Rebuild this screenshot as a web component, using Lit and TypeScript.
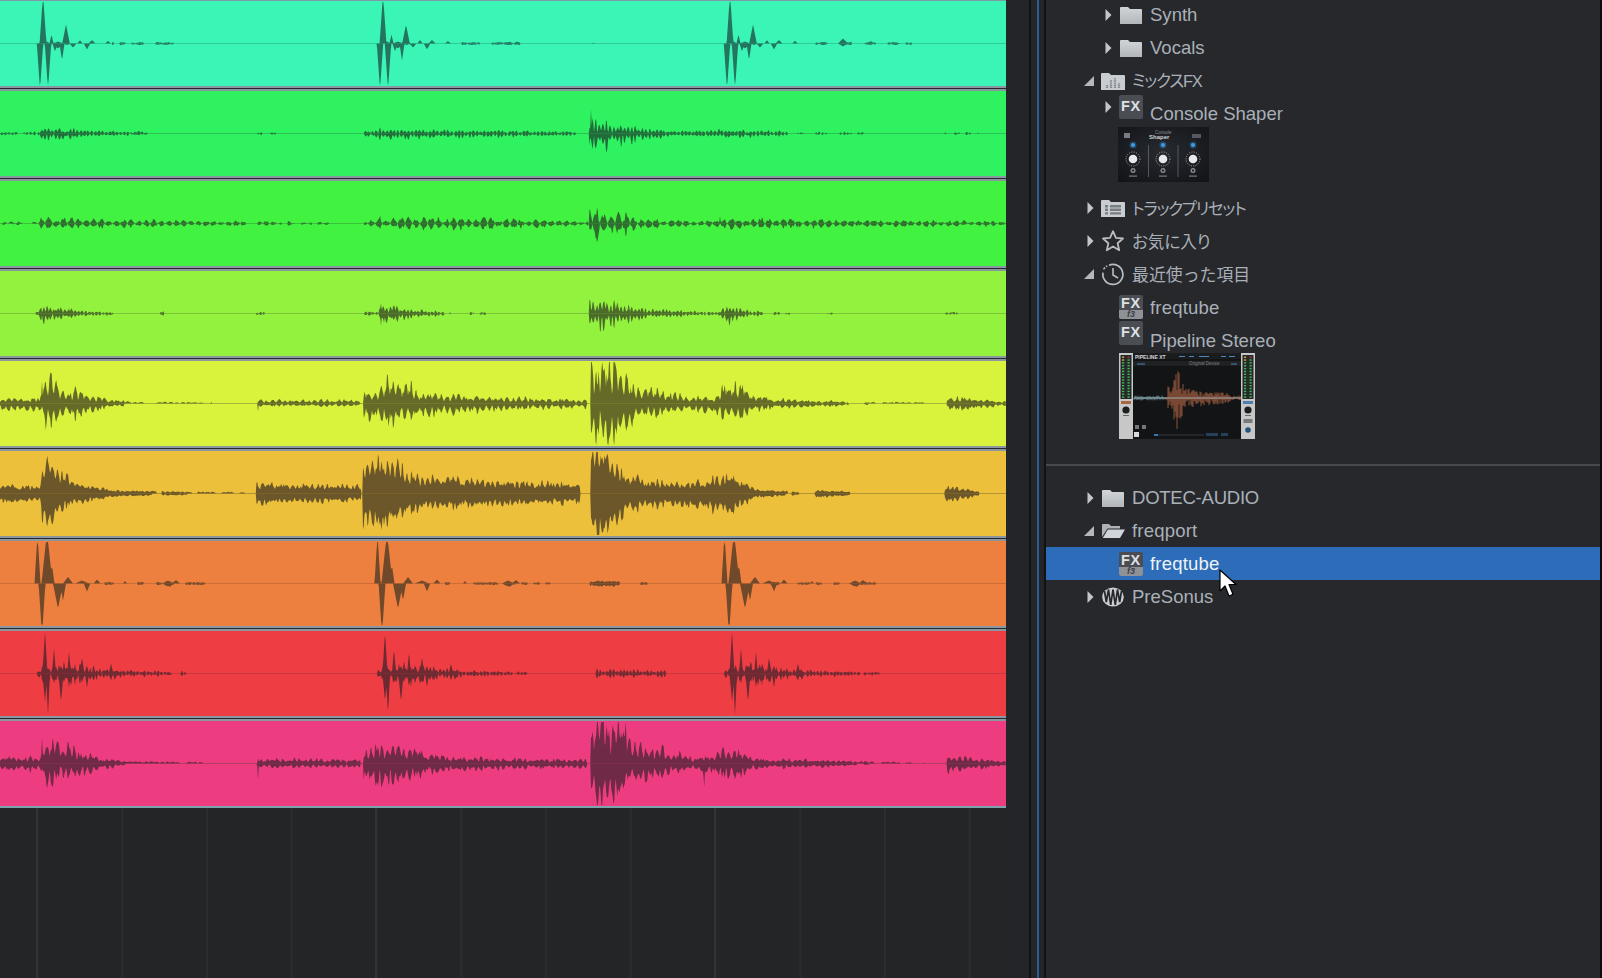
import { LitElement, html, css, svg } from "lit";
import { customElement } from "lit/decorators.js";

type K = [number, number][];
type S = [number, number, number, number];
interface Wave { color: string; ink: string; line: string; u: K; d: K; s: S[]; p: number; seed: number; sol: number; }

const key = (k: K, x: number) => {
  if (!k.length || x < k[0][0] || x > k[k.length - 1][0]) return 0;
  for (let i = 1; i < k.length; i++) {
    if (x <= k[i][0]) {
      const [a, va] = k[i - 1], [b, vb] = k[i];
      return b === a ? vb : va + ((vb - va) * (x - a)) / (b - a);
    }
  }
  return 0;
};
const hash = (n: number) => { const v = Math.sin(n * 127.1 + 11.7) * 43758.5453; return v - Math.floor(v); };
const modul = (x: number, w: Wave, seed: number) => {
  const ripple = Math.abs(Math.sin((Math.PI * x) / w.p));
  const base = w.sol + (1 - w.sol) * ripple;
  const noiseAmp = 0.8 * (1 - w.sol * 0.6);
  const lump = 1 - (1 - w.sol) * 0.5 * (1 - Math.abs(Math.sin((Math.PI * x) / (w.p * 3.7))));
  return base * lump * (1.15 - noiseAmp * hash(Math.floor(x / 1.5) + seed));
};
const rep = (list: S[], offs: number[]) => offs.flatMap((o) => list.map(([x, u, d, h]) => [x + o, u, d, h] as S));

const wavePath = (w: Wave) => {
  const H = 42.5, top: string[] = [], bot: string[] = [];
  for (let x = 0; x <= 1006; x += 0.75) {
    const one = (k: K, idx: 1 | 2, seed: number) => {
      const kv = key(k, x);
      let a = kv * modul(x, w, seed);
      if (a < 0.5) a = 0;
      if (kv < 2.6 && hash(Math.floor(x / 6) + w.seed * 2) < (kv < 1.7 ? 0.55 : 0.3)) a = 0;
      for (const sp of w.s) {
        const t = 1 - Math.abs(x - sp[0]) / sp[3];
        if (t > 0) a = Math.max(a, sp[idx] * t);
      }
      return Math.min(a, 41.5);
    };
    top.push(`${x} ${(H - one(w.u, 1, w.seed)).toFixed(1)}`);
    bot.unshift(`${x} ${(H + one(w.d, 2, w.seed + 91)).toFixed(1)}`);
  }
  return `M${top.join("L")}L${bot.join("L")}Z`;
};

const sparse = (a: number, b: number, v = 1.4): [K, K] => [[[a, v], [b, v]], [[a, v], [b, v]]];
const join = (...parts: [K, K][]): [K, K] => [parts.flatMap((p) => [[p[0][0][0] - 0.1, 0], ...p[0], [p[0][p[0].length - 1][0] + 0.1, 0]] as K), parts.flatMap((p) => [[p[1][0][0] - 0.1, 0], ...p[1], [p[1][p[1].length - 1][0] + 0.1, 0]] as K)];

const k1 = join(sparse(112, 187, 1.6), sparse(452, 520, 1.6), sparse(593, 615, 1.4), sparse(790, 918, 1.6));
const kick1: S[] = [[43, 50, 0, 3.4], [47, 2, 0, 3], [51.5, 9, 0, 2], [58, 2, 0, 5], [66, 19, 0, 3.8], [80, 3.5, 0, 2.5], [92, 3.5, 0, 3.5], [108, 2.5, 0, 3],
  [40, 0, 46, 3.2], [48, 0, 46, 3.2], [55, 0, 8, 2.5], [62, 0, 17, 2.5], [58, 0, 5, 5], [73, 0, 4, 3.5], [87, 0, 6, 3.2], [67, 0, 1.5, 4]];
const k7 = join(sparse(105, 205, 1.6), sparse(445, 550, 1.6), sparse(590, 620, 3.2), sparse(640, 648, 1.5), sparse(770, 880, 1.6));
const kick7: S[] = [[37.5, 50, 0, 3], [47, 52, 0, 5.5], [52, 18, 0, 2.5], [68, 6.5, 0, 5], [82, 3, 0, 7], [97, 4, 0, 3.5], [125, 2.5, 0, 2], [168, 3, 3, 6], [176, 3.5, 0, 4],
  [42, 0, 52, 3.4], [58, 0, 25, 5], [63, 0, 17, 3], [87, 0, 8, 3.2], [170, 0, 3.5, 3]];
const k8 = join(
  [[[38, 4], [45, 9], [80, 9], [100, 6], [120, 4], [190, 2.1]], [[38, 4], [45, 9], [80, 10], [100, 6], [120, 4], [190, 2.1]]],
  [[[378, 4], [385, 9], [420, 9], [440, 6], [460, 4], [530, 2.2]], [[378, 4], [385, 9], [420, 10], [440, 6], [460, 4], [530, 2.2]]],
  [[[596, 5], [667, 4]], [[596, 5], [667, 4]]],
  [[[725, 4], [732, 9], [767, 9], [787, 6], [807, 4], [880, 2.1]], [[725, 4], [732, 9], [767, 10], [787, 6], [807, 4], [880, 2.1]]]);
const kick8: S[] = [[45, 42, 28, 2.5], [48, 6, 42, 2], [54, 25, 10, 2], [59, 10, 8, 1.5], [61, 8, 29, 2.5], [64, 14, 10, 1.5], [69, 22, 14, 1.8], [71, 6, 14, 1.5], [75, 10, 12, 1.5], [82, 17, 10, 2], [87, 8, 14, 2], [94, 7, 8, 1.5], [100, 6, 4, 1.5], [111, 10, 7, 2.2], [115, 3, 7, 2], [38, 3, 4, 1]];

const w3 = join(
  [[[0, 2], [39, 2], [45, 7], [90, 5.5], [200, 3], [340, 1.8]], [[0, 1.6], [39, 1.6], [45, 6], [90, 5.5], [200, 3], [340, 1.6]]],
  [[[364, 2.5], [378, 4], [400, 7.5], [480, 6.5], [588, 3]], [[364, 2], [378, 4], [400, 7.5], [480, 6.5], [588, 3]]],
  [[[589, 17], [615, 13], [644, 5], [700, 3], [725, 6.5], [800, 5], [1006, 2.7]], [[589, 19], [615, 15], [644, 6], [700, 3], [725, 6.5], [800, 5], [1006, 2.7]]]);
const w2 = join(
  [[[0, 2.2], [38, 2.2], [40, 6], [78, 5], [86, 3.5], [148, 2.4]], [[0, 2], [38, 2], [40, 7], [78, 6], [86, 3.5], [148, 2.2]]],
  sparse(256, 278, 1.6),
  [[[364, 3], [378, 4], [395, 4.5], [450, 4], [580, 2.5]], [[364, 3], [378, 6], [395, 7], [450, 5], [580, 2.5]]],
  [[[589, 16], [610, 12], [644, 6], [680, 3], [730, 4.5], [790, 2.5]], [[589, 24], [610, 16], [644, 7], [680, 3], [730, 5], [790, 2.5]]],
  sparse(790, 870, 1.6), sparse(945, 978, 1.6));
const w4 = join(
  [[[0, 1.6], [37, 1.6], [42, 10], [60, 7], [85, 3], [113, 2.2]], [[0, 1.6], [37, 1.6], [42, 10], [60, 7], [85, 3], [113, 2.2]]],
  sparse(160, 164, 3), sparse(256, 264, 2),
  [[[364, 2.2], [378, 2.2], [384, 12], [412, 4.5], [450, 2.2]], [[364, 2.2], [378, 2.2], [384, 13], [412, 5], [450, 2.2]]],
  sparse(470, 520, 1.6),
  [[[589, 18], [610, 13], [644, 6], [683, 3.5], [720, 2], [726, 11], [750, 3], [795, 1.6]], [[589, 21], [610, 15], [644, 6], [683, 3.5], [720, 2], [726, 13], [750, 3], [795, 1.6]]],
  sparse(820, 838, 1.6), sparse(945, 966, 1.6));
const w5 = join(
  [[[0, 6], [40, 6], [42, 24], [50, 33], [60, 16], [85, 16], [100, 7], [125, 3.2], [138, 1.6], [212, 1.6]], [[0, 8], [40, 8], [44, 22], [50, 26], [60, 16], [85, 16], [100, 7], [125, 2.4]]],
  [[[258, 4.2], [360, 4]], [[258, 3.2], [360, 3.2]]],
  [[[364, 13], [378, 16], [392, 32], [420, 15], [451, 10], [520, 7], [587, 4.4]], [[364, 20], [378, 22], [390, 26], [420, 16], [451, 12], [520, 7], [587, 5.4]]],
  [[[591, 50], [618, 50], [632, 22], [644, 20], [695, 8], [715, 9], [728, 26], [740, 26], [752, 10], [773, 6], [818, 3.4], [870, 2], [925, 1.6]], [[591, 50], [609, 50], [625, 30], [644, 17], [695, 8], [725, 16], [735, 22], [752, 10], [773, 6], [818, 4], [870, 1.6]]],
  [[[947, 9], [965, 7], [1006, 2.2]], [[947, 9], [965, 8], [1006, 2.2]]]);
const w6 = join(
  [[[0, 9], [40, 8], [42, 20], [48, 36], [64, 21], [84, 10], [116, 3.4], [187, 2], [245, 1.6]], [[0, 10], [40, 8], [42, 28], [52, 36], [64, 15], [84, 10], [116, 3.4], [187, 1.8]]],
  [[[256, 12], [290, 10], [361, 8.5]], [[256, 13], [290, 10], [361, 8.5]]],
  [[[363, 32], [385, 38], [419, 19], [500, 14], [580, 11]], [[363, 36], [385, 38], [419, 17], [500, 13], [580, 11]]],
  [[[591, 50], [605, 50], [618, 26], [644, 14], [690, 12], [715, 17], [730, 21], [754, 5], [799, 1.8]], [[591, 50], [600, 50], [618, 28], [644, 14], [700, 15], [730, 23], [754, 5], [799, 1.6]]],
  [[[815, 3.4], [850, 2.4]], [[815, 4.4], [850, 2.4]]],
  [[[945, 7.5], [957, 6.5], [979, 2.4]], [[945, 8.5], [957, 7.5], [979, 2.4]]]);
const w9 = join(
  [[[0, 7], [40, 7], [42, 24], [50, 28], [62, 24], [85, 13], [100, 6], [125, 3], [160, 2.4], [210, 1.6]], [[0, 8], [40, 8], [44, 22], [50, 26], [60, 16], [85, 14], [100, 7], [125, 2.4]]],
  [[[258, 5.5], [360, 4.6]], [[258, 4.6], [360, 4.6]]],
  [[[364, 16], [378, 22], [395, 22], [420, 14], [451, 8], [520, 5.5], [587, 4.5]], [[364, 20], [378, 24], [390, 28], [420, 14], [451, 9], [520, 6.5], [587, 4.5]]],
  [[[591, 50], [625, 50], [635, 24], [660, 18], [695, 7], [715, 9], [728, 20], [740, 15], [752, 7], [773, 5], [818, 4.5], [870, 2.4], [925, 1.6]], [[591, 50], [612, 50], [625, 28], [660, 15], [695, 7], [725, 16], [735, 20], [752, 7], [773, 5], [818, 4.5], [870, 1.6]]],
  [[[947, 9], [965, 7], [1006, 2.6]], [[947, 10], [965, 8], [1006, 2.6]]]);

const waves: Wave[] = [
  { color: "#3bf5b6", ink: "#23755f", line: "#30cc99", u: k1[0], d: k1[1], s: [...rep(kick1, [0, 340, 687]), [843, 5, 3, 5], [871, 2.5, 1, 3]], p: 9, seed: 3, sol: .5 },
  { color: "#2ef260", ink: "#226c3c", line: "#2bc354", u: w2[0], d: w2[1], s: [[591, 24, 0, 1], [380, 8, 0, 1.2], [719, 6, 0, 1.5]], p: 3.6, seed: 7, sol: .15 },
  { color: "#42f240", ink: "#306d30", line: "#3ac338", u: w3[0], d: w3[1], s: [[41, 8, 7, 1.2], [380, 10, 7, 1.2], [720, 7, 0, 1]], p: 7.5, seed: 13, sol: .05 },
  { color: "#92f23e", ink: "#4b6b2a", line: "#7cc43a", u: w4[0], d: w4[1], s: [[41, 8, 9, 1.2], [381, 10, 12, 1.2], [727, 9, 10, 1.2]], p: 3.5, seed: 21, sol: .2 },
  { color: "#d9f23c", ink: "#666a28", line: "#a8b836", u: w5[0], d: w5[1], s: [[42, 22, 0, 1.2], [50, 29, 6, 1.3], [46, 4, 33, 1.3], [258, 2, 8, 0.8], [364, 10, 20, 0.9]], p: 6, seed: 31, sol: .35 },
  { color: "#ecc03b", ink: "#6b5729", line: "#b49433", u: w6[0], d: w6[1], s: [[48, 30, 0, 1.3], [597, 42, 42, 2], [730, 17, 20, 1]], p: 5, seed: 37, sol: .62 },
  { color: "#ee803f", ink: "#70492b", line: "#cc6f38", u: k7[0], d: k7[1], s: rep(kick7, [0, 340, 687]), p: 4, seed: 43, sol: .5 },
  { color: "#ee3d43", ink: "#6c2a32", line: "#c9373d", u: k8[0], d: k8[1], s: rep(kick8, [0, 340, 687]), p: 3.4, seed: 53, sol: .12 },
  { color: "#ee3c80", ink: "#6e2a47", line: "#b93a6a", u: w9[0], d: w9[1], s: [[42, 26, 4, 1], [47, 4, 30, 1.3], [258, 5, 16, 0.9], [704, 4, 34, 0.8], [364, 8, 24, 0.8]], p: 5.5, seed: 61, sol: .4 },
];

const folder = svg`<svg class="ic" width="24" height="20" viewBox="0 0 24 20"><defs><linearGradient id="f" x1="0" y1="0" x2="0" y2="1"><stop offset="0" stop-color="#d2d5d8"/><stop offset="1" stop-color="#b2b6ba"/></linearGradient></defs><path d="M1 3a1 1 0 0 1 1-1h7l2 2h11a1 1 0 0 1 1 1v14H1z" fill="url(#f)"/></svg>`;
const folderOpen = svg`<svg class="ic" width="24" height="20" viewBox="0 0 24 20"><path d="M1 4a1 1 0 0 1 1-1h6l2 2h9v2.5H6.5L1 16z" fill="#aeb2b7"/><path d="M6.8 8.5H24L19 17H1.8z" fill="#d1d4d8"/></svg>`;
const folderMix = svg`<svg class="ic" width="24" height="20" viewBox="0 0 24 20"><path d="M0 3a1 1 0 0 1 1-1h7l2 2h13a1 1 0 0 1 1 1v14H0z" fill="#c9ccd0"/><path d="M6 17v-3M10 17V9M14 17V7M18 17v-5" stroke="#858a90" stroke-width="2.200" stroke-dasharray="1.400 .7" fill="none"/></svg>`;
const folderList = svg`<svg class="ic" width="24" height="20" viewBox="0 0 24 20"><path d="M0 3a1 1 0 0 1 1-1h7l2 2h13a1 1 0 0 1 1 1v14H0z" fill="#c9ccd0"/><path d="M4 7h3v2.400H4zm5 0h11v2.400H9zm-5 3.600h3V13H4zm5 0h11V13H9zM4 14.200h3v2.400H4zm5 0h11v2.400H9z" fill="#797e85"/></svg>`;
const star = svg`<svg class="ic" width="24" height="24" viewBox="0 0 24 24"><path d="M12 2.200l2.900 6.600 7.100.7-5.400 4.700 1.600 7-6.200-3.700-6.200 3.700 1.600-7L2 9.500l7.100-.7z" fill="none" stroke="#b9bdc2" stroke-width="1.800" stroke-linejoin="round"/></svg>`;
const clock = svg`<svg class="ic" width="24" height="24" viewBox="0 0 24 24"><path d="M8 3.200a10 10 0 1 1-6 7.500" fill="none" stroke="#b9bdc2" stroke-width="1.700"/><path d="M2.500 7.200l1.500-1.700M5 4.600l1.200-.8" stroke="#b9bdc2" stroke-width="1.500" fill="none"/><path d="M12 6v7l5 3" fill="none" stroke="#b9bdc2" stroke-width="1.600"/></svg>`;
const presonus = svg`<svg class="ic" width="24" height="24" viewBox="0 0 24 24"><ellipse cx="12" cy="12" rx="10.800" ry="9.500" fill="#c9ccd0"/><path d="M3.500 6l1.800 11L7.500 4.500 9.700 20l2.300-15.500L14.300 20l2.200-15.500L18.700 17l1.800-11" stroke="#25272b" stroke-width="1.700" fill="none"/></svg>`;

const fx = html`<span class="fx"><span class="fxt">FX</span></span>`;
const fxv = html`<span class="fx two"><span class="fxt">FX</span><span class="fxb">f3</span></span>`;

const consoleThumb = svg`<svg class="thumb" width="91" height="55" viewBox="0 0 91 55">
  <defs><radialGradient id="cg" cx=".5" cy=".45" r=".7"><stop offset="0" stop-color="#272a2f"/><stop offset="1" stop-color="#121418"/></radialGradient></defs>
  <rect width="91" height="55" fill="url(#cg)"/>
  <rect x="6" y="6" width="6" height="5" fill="#777c82"/>
  <text x="37" y="6.500" class="t1" fill="#8b8f95">Console</text>
  <text x="31" y="11.500" class="t2" fill="#d0d2d5">Shaper</text>
  <rect x="74" y="7" width="9" height="4" fill="#55595f"/>
  <path d="M30.500 18v32M60 18v32" stroke="#63676d" stroke-width=".8"/>
  ${[15, 45, 75].map((x) => svg`
    <circle cx=${x} cy="18" r="2" fill="#3a9eea"/><circle cx=${x} cy="18" r="3.600" fill="#3a9eea" opacity=".3"/>
    <circle cx=${x} cy="32" r="7" fill="none" stroke="#a9adb2" stroke-width="1" stroke-dasharray="1 1.400"/>
    <circle cx=${x} cy="32" r="4.300" fill="#e8e9ea"/>
    <circle cx=${x} cy="43.500" r="2.500" fill="#8b8f95"/><circle cx=${x} cy="43.500" r="1.200" fill="#2a2c30"/>
    <rect x=${x - 4} y="48.500" width="8" height="1.200" fill="#777c82"/>`)}
</svg>`;

const meter = (x: number) => svg`
  <rect x=${x} y="0" width="14" height="86" fill="#c6c7c6"/>
  <rect x=${x + 1.500} y="2" width="11" height="44" fill="#26282a"/>
  ${Array.from({ length: 15 }, (_, i) => svg`<rect x=${x + 3} y=${3.500 + i * 2.850} width="2.200" height="1.400" fill=${i < 2 ? "#d9a63a" : "#3fbb55"}/><rect x=${x + 8.500} y=${3.500 + i * 2.850} width="2.200" height="1.400" fill=${i < 1 ? "#b33" : "#3fbb55"}/>`)}
  <rect x=${x + 2} y="48" width="10" height="3" fill=${x < 20 ? "#a8683f" : "#4a7fb0"}/>
  <circle cx=${x + 7} cy="57" r="3.600" fill="#1c1d1f"/>
  <rect x=${x + 4} y="62" width="6" height="1" fill="#66696d"/>`;

const pipeWave = (() => {
  let d = "", e = "";
  for (let x = 15; x < 123; x++) {
    const c = Math.exp(-Math.pow((x - 58) / 5, 2));
    const broad = x > 48 && x < 112 ? 9 * (1 - (x - 48) / 90) : 0;
    const a = (2.500 + broad + 18 * c) * (0.2 + 0.8 * hash(x * 3));
    const b = (2.500 + broad + 22 * c) * (0.2 + 0.8 * hash(x * 5 + 2));
    (x > 46 ? (d += `M${x} ${45 - a}V${45 + b}`) : (e += `M${x} ${45 - a}V${45 + b}`));
  }
  return { d, e };
})();
const pipelineThumb = svg`<svg class="thumb" width="136" height="86" viewBox="0 0 136 86">
  <rect width="136" height="86" fill="#131416"/>
  <rect x="14" y="0" width="109" height="6" fill="#1b1c1e"/>
  <rect x="14" y="8" width="109" height="5" fill="#1f2123"/>
  <text x="16" y="5.500" class="t3" fill="#d4d5d6">PIPELINE XT</text>
  <text x="70" y="12" class="t1" fill="#7f8387">Original Device</text>
  <path d="M60 3.500h6M70 3.500h5M80 3.500h10M102 3.500h5M110 3.500h6M18 11h8M112 11h6" stroke="#4a86c2" stroke-width="1"/>
  <path d=${pipeWave.e} stroke="#7da7b4" stroke-width=".7" fill="none"/>
  <path d=${pipeWave.d} stroke="#c4704b" stroke-width=".7" fill="none"/>
  <path d="M15 45h107" stroke="#a9c0c4" stroke-width=".8"/>
  <rect x="16" y="72" width="4" height="4" fill="#777"/><rect x="23" y="72" width="4" height="4" fill="#777"/>
  <rect x="35" y="81" width="50" height="2" fill="#23262b"/><rect x="35" y="81" width="4" height="2" fill="#2f79bd"/>
  <rect x="87" y="80" width="12" height="3" fill="#26405c"/><rect x="102" y="80" width="7" height="3" fill="#26405c"/>
  ${meter(0)}${meter(122)}
  <rect x="124.500" y="66" width="9" height="4" fill="#77797b"/>
  <circle cx="129" cy="77" r="2.800" fill="#24527e"/>
  <rect x="15" y="79" width="5" height="5" fill="#d9d9d9"/>
</svg>`;

@customElement("app-root")
export class AppRoot extends LitElement {
  static styles = css`
    :host { display: block; width: 1602px; height: 978px; overflow: hidden; background: #232527; }
    .app { display: flex; width: 1602px; height: 978px; }
    .arrange { width: 1006px; display: flex; flex-direction: column; flex: none; }
    .topline { height: 1px; background: #7f9aa6; flex: none; }
    .track { height: 85px; flex: none; }
    .track svg { display: block; }
    .sep { height: 5px; flex: none; display: flex; flex-direction: column; }
    .sep i { display: block; height: 2px; background: #8a97a1; }
    .sep b { display: block; height: 1px; background: #26282e; }
    .endline { height: 2px; background: #7fa3ae; flex: none; }
    .grid {
      flex: 1;
      background-color: #232527;
      background-image:
        linear-gradient(90deg, #313336 2px, transparent 2px),
        linear-gradient(90deg, #2a2c2f 2px, transparent 2px);
      background-size: 339px 100%, 84.75px 100%;
      background-position: 36px 0, 36.5px 0;
    }
    .gutter { width: 40px; flex: none; display: flex; background: #232529; }
    .gutter .dark { width: 2px; background: #111214; }
    .gutter .blue { width: 1.500px; background: #2b5c92; }
    .g1 { width: 24px; } .g2 { width: 6px; } .g3 { width: 5.500px; }
    .panel { width: 554px; flex: none; background: #26282c; overflow: hidden; position: relative; color: #aab0b8;
      font: 18.550px/33px "Liberation Sans", "Noto Sans CJK JP", sans-serif; }
    .edge { width: 2px; flex: none; background: #0c0c0d; }
    .tree { margin-top: -2px; display: flex; flex-direction: column; }
    .row { height: 33px; display: flex; align-items: center; white-space: nowrap; flex: none; }
    .l1 { padding-left: 39px; }
    .l2 { padding-left: 57px; }
    .arrow { width: 16px; flex: none; display: flex; align-items: center; }
    .l2 .arrow { width: 16px; }
    .arrow svg { display: block; }
    .arrow .open { margin-left: -1px; }
    .icon { width: 31px; flex: none; display: flex; align-items: center; }
    .l2 .icon { width: 31px; }
    .ic { display: block; }
    .up { margin-top: -14px; }
    .jp { font-size: 16.500px; font-feature-settings: "palt"; padding-top: 2px; line-height: 31px; }
    .kana { letter-spacing: -1.200px; }
    .kana2 { letter-spacing: -1.250px; }
    .recent { font-size: 16.900px; font-feature-settings: normal; }
    .tight { letter-spacing: -.25px; }
    .wide { letter-spacing: .2px; }
    .fx { display: flex; flex-direction: column; width: 24px; height: 24px; border-radius: 2px; overflow: hidden; background: #4a4d54; align-items: center; }
    .fxt { font: bold 14.500px/23px "Liberation Sans", sans-serif; letter-spacing: .8px; color: #dfe1e3; height: 24px; }
    .two .fxt { line-height: 16px; height: 15px; }
    .fxb { display: block; width: 24px; height: 9px; background: #8e9196; color: #3e4044; text-align: center;
      font: italic bold 9px/9px "Liberation Sans", sans-serif; }
    .thumbrow { flex: none; }
    .thumb { display: block; }
    .t1 { font: 4.500px "Liberation Sans", sans-serif; }
    .t2 { font: bold 6px "Liberation Sans", sans-serif; }
    .t3 { font: bold 5px "Liberation Sans", sans-serif; }
    .tc { margin: -3px 0 9.500px 72px; }
    .tp { margin: -3.500px 0 0 73px; }
    .rule { height: 2px; background: #47494d; margin: 24.500px 0 15.500px; flex: none; }
    .sel { background: #2c6cb8; color: #eef3f8; }
    .cursor { position: absolute; left: 173px; top: 569px; }
  `;

  private tri(open: boolean) {
    return open
      ? html`<svg class="open" width="10" height="10" viewBox="0 0 10 10"><path d="M0 10L10 0v10z" fill="#b4b8bc"/></svg>`
      : html`<svg width="9" height="12" viewBox="0 0 9 12"><path d="M2.500 0l6 6-6 6z" fill="#c2c5c9"/></svg>`;
  }
  private row(level: 1 | 2, arrow: "o" | "c" | "", icon: unknown, label: unknown, opts: { up?: boolean; sel?: boolean; cls?: string } = {}) {
    return html`<div class="row l${level} ${opts.sel ? "sel" : ""}">
      <span class="arrow ${opts.up ? "up" : ""}">${arrow ? this.tri(arrow === "o") : ""}</span>
      <span class="icon ${opts.up ? "up" : ""}">${icon}</span>
      <span class=${opts.cls ?? ""}>${label}</span>
    </div>`;
  }

  render() {
    return html`<div class="app">
      <div class="arrange">
        <div class="topline"></div>
        ${waves.map((w, i) => html`
          <div class="track" style="background:${w.color}">
            <svg width="1006" height="85" viewBox="0 0 1006 85">
              <rect x="0" y="42" width="1006" height="1" fill=${w.line}></rect>
              <path d=${wavePath(w)} fill=${w.ink}></path>
              <rect x="0" y="42" width="1006" height="1" fill=${w.line} opacity=".2"></rect>
            </svg>
          </div>
          ${i < waves.length - 1 ? html`<div class="sep"><i></i><b></b><i></i></div>` : html`<div class="endline"></div>`}`)}
        <div class="grid"></div>
      </div>
      <div class="gutter">
        <div class="g1"></div><div class="dark"></div><div class="g2"></div><div class="blue"></div><div class="g3"></div><div class="dark"></div>
      </div>
      <div class="panel">
        <div class="tree">
          ${this.row(2, "c", folder, "Synth")}
          ${this.row(2, "c", folder, "Vocals")}
          ${this.row(1, "o", folderMix, "ミックスFX", { cls: "jp kana" })}
          ${this.row(2, "c", fx, "Console Shaper", { up: true })}
          <div class="thumbrow tc">${consoleThumb}</div>
          ${this.row(1, "c", folderList, "トラックプリセット", { cls: "jp kana2" })}
          ${this.row(1, "c", star, "お気に入り", { cls: "jp" })}
          ${this.row(1, "o", clock, "最近使った項目", { cls: "jp recent" })}
          ${this.row(2, "", fxv, "freqtube", { cls: "wide" })}
          ${this.row(2, "", fx, "Pipeline Stereo", { up: true })}
          <div class="thumbrow tp">${pipelineThumb}</div>
          <div class="rule"></div>
          ${this.row(1, "c", folder, "DOTEC-AUDIO", { cls: "tight" })}
          ${this.row(1, "o", folderOpen, "freqport", { cls: "wide" })}
          ${this.row(2, "", fxv, "freqtube", { sel: true, cls: "wide" })}
          ${this.row(1, "c", presonus, "PreSonus")}
        </div>
        <svg class="cursor" width="20" height="30" viewBox="0 0 20 30">
          <path d="M1 1v21l5-5 4 10 4-1.700-4-9.800h7z" fill="#fff" stroke="#000" stroke-width="1.200" stroke-linejoin="round"></path>
        </svg>
      </div>
      <div class="edge"></div>
    </div>`;
  }
}
